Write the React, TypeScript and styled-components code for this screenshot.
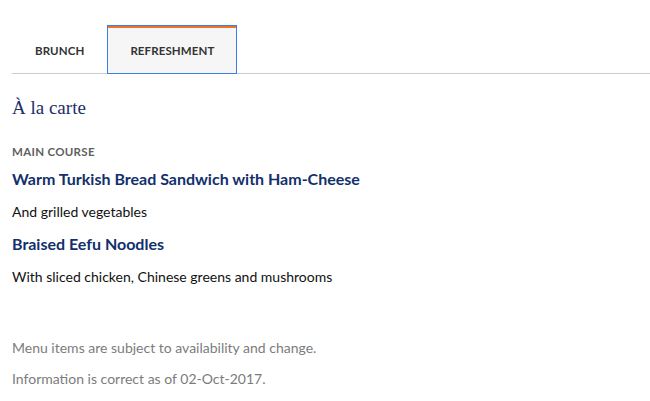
import { useState } from "react";
import styled, { createGlobalStyle } from "styled-components";

const GlobalStyle = createGlobalStyle`
  body {
    margin: 0;
    background: #fff;
    font-family: Lato, "Open Sans", sans-serif;
  }
`;

const tabs = ["Brunch", "Refreshment"];

const menu = [
  {
    name: "Warm Turkish Bread Sandwich with Ham-Cheese",
    note: "And grilled vegetables",
  },
  {
    name: "Braised Eefu Noodles",
    note: "With sliced chicken, Chinese greens and mushrooms",
  },
];

const App = () => {
  const [active, setActive] = useState(1);

  return (
    <Page>
      <GlobalStyle />
      <TabBar>
        {tabs.map((tab, idx) => (
          <Tab
            key={tab}
            $active={idx === active}
            onClick={() => setActive(idx)}
          >
            {tab}
          </Tab>
        ))}
      </TabBar>
      <Title>À la carte</Title>
      <Section>Main course</Section>
      {menu.map((item) => (
        <Item key={item.name}>
          <ItemName>{item.name}</ItemName>
          <ItemNote>{item.note}</ItemNote>
        </Item>
      ))}
      <Footer>
        <FootNote>Menu items are subject to availability and change.</FootNote>
        <FootNote>Information is correct as of 02-Oct-2017.</FootNote>
      </Footer>
    </Page>
  );
};

export default App;

const Page = styled.div`
  padding: 25px 0 0 12px;
`;

const TabBar = styled.div`
  display: flex;
  border-bottom: 1px solid #cccccc;
`;

const Tab = styled.button<{ $active: boolean }>`
  box-sizing: border-box;
  height: 49px;
  margin-bottom: -1px;
  padding: 1px 22px 0;
  font-family: inherit;
  font-size: 11.5px;
  font-weight: 700;
  letter-spacing: 0.1px;
  text-transform: uppercase;
  color: #333;
  cursor: pointer;
  background: ${({ $active }) => ($active ? "#f6f6f6" : "transparent")};
  border: 1px solid ${({ $active }) => ($active ? "#3a7ee8" : "transparent")};
  box-shadow: ${({ $active }) => ($active ? "inset 0 2px 0 #e8742d" : "none")};
  outline: none;
`;

const Title = styled.h1`
  margin: 21px 0 0;
  font-family: "Liberation Serif", serif;
  font-size: 19px;
  line-height: 26px;
  font-weight: 400;
  color: #1d2f68;
`;

const Section = styled.h2`
  margin: 24px 0 0;
  font-size: 11.5px;
  line-height: 14px;
  font-weight: 700;
  letter-spacing: 0.3px;
  text-transform: uppercase;
  color: #5f5f5f;
`;

const Item = styled.div`
  margin-top: 10px;

  & + & {
    margin-top: 12px;
  }
`;

const ItemName = styled.h3`
  margin: 0;
  font-size: 16px;
  line-height: 20px;
  font-weight: 700;
  color: #12306c;
`;

const ItemNote = styled.p`
  margin: 13px 0 0;
  font-size: 14px;
  line-height: 20px;
  color: #111;
`;

const Footer = styled.div`
  margin-top: 51px;
`;

const FootNote = styled.p`
  margin: 0 0 11px;
  font-size: 14px;
  line-height: 20px;
  color: #7c7c7c;
`;
